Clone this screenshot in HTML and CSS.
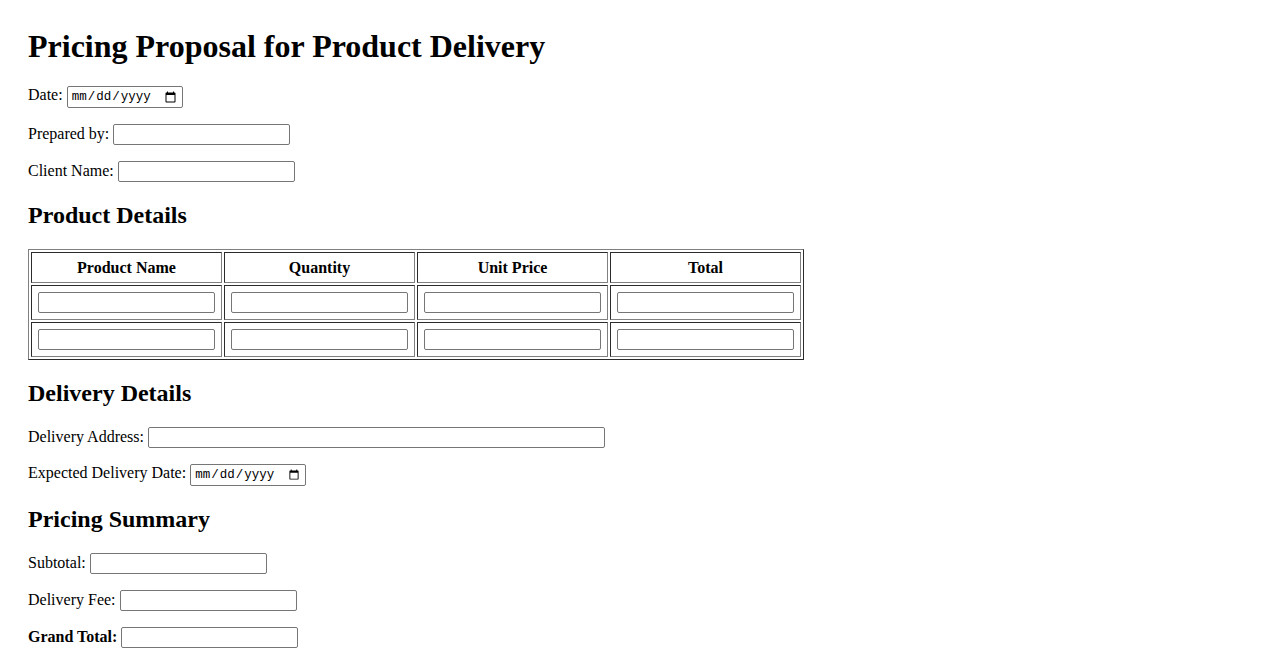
FILE: index.html
```html
<!DOCTYPE html>
<html>
<head>
<meta charset="utf-8">
<title>Pricing Proposal for Product Delivery</title>
<link rel="stylesheet" href="styles.css">
</head>
<body>
<div class="page">
  <h1 class="title">Pricing Proposal for Product Delivery</h1>
  <p class="field">Date: <input type="date" class="date"></p>
  <p class="field">Prepared by: <input type="text" class="text"></p>
  <p class="field">Client Name: <input type="text" class="text"></p>

  <h2 class="section">Product Details</h2>
  <table class="products" border="1" cellspacing="2">
    <thead>
      <tr>
        <th>Product Name</th>
        <th>Quantity</th>
        <th>Unit Price</th>
        <th>Total</th>
      </tr>
    </thead>
    <tbody>
      <tr>
        <td><input type="text" class="text"></td>
        <td><input type="text" class="text"></td>
        <td><input type="text" class="text"></td>
        <td><input type="text" class="text"></td>
      </tr>
      <tr>
        <td><input type="text" class="text"></td>
        <td><input type="text" class="text"></td>
        <td><input type="text" class="text"></td>
        <td><input type="text" class="text"></td>
      </tr>
    </tbody>
  </table>

  <h2 class="section">Delivery Details</h2>
  <p class="field">Delivery Address: <input type="text" class="text wide"></p>
  <p class="field">Expected Delivery Date: <input type="date" class="date"></p>

  <h2 class="section">Pricing Summary</h2>
  <p class="field">Subtotal: <input type="text" class="text"></p>
  <p class="field">Delivery Fee: <input type="text" class="text"></p>
  <p class="field"><strong>Grand Total:</strong> <input type="text" class="text"></p>
</div>
</body>
</html>
```
FILE: styles.css
```css
html, body {
  margin: 0;
  padding: 0;
  background: #ffffff;
}

body {
  font-family: "Liberation Serif", "Times New Roman", serif;
  font-size: 16px;
  color: #000000;
}

.page {
  padding: 28px;
}

.title {
  font-size: 32px;
  font-weight: bold;
  margin: 0 0 21.44px 0;
}

.section {
  font-size: 24px;
  font-weight: bold;
  margin: 19.92px 0;
}

.field {
  margin: 16px 0;
}

.text,
.date {
  box-sizing: border-box;
  border: 1px solid #767676;
  border-radius: 2px;
  background: #ffffff;
  margin: 0;
  font-size: 13.333px;
  vertical-align: baseline;
}

.text {
  width: 177px;
  height: 21px;
  padding: 1px 3px;
}

.date {
  width: 116px;
  height: 22px;
  padding: 1px 3px;
  font-family: "Liberation Mono", "DejaVu Sans Mono", monospace;
  font-size: 12.5px;
}

.wide {
  width: 457px;
}

.products {
  border-collapse: separate;
  border-spacing: 2px;
  border: 1px outset #808080;
}

.products th,
.products td {
  border: 1px inset #808080;
  padding: 6px;
  text-align: center;
}

.products th {
  font-weight: bold;
  padding-bottom: 5px;
}
```
